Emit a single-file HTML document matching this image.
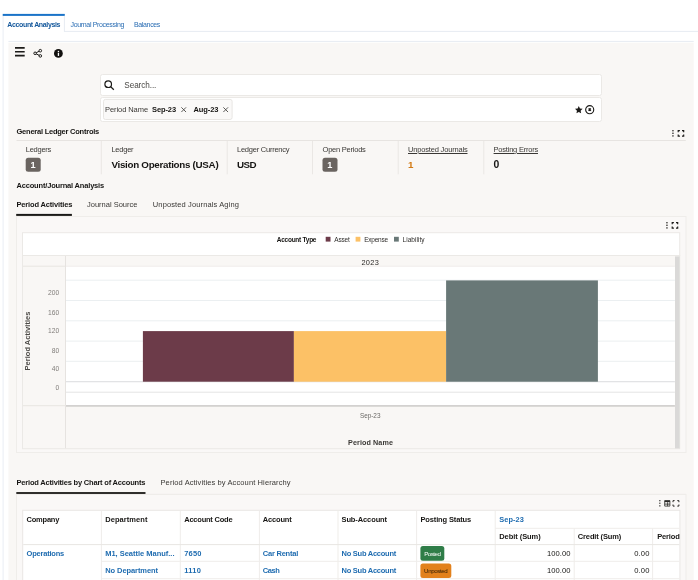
<!DOCTYPE html>
<html lang="en"><head><meta charset="utf-8"><title>Account Analysis</title>
<style>
html,body{margin:0;padding:0;background:#fff;}
body{width:698px;height:580px;overflow:hidden;}
#root{position:relative;width:698px;height:580px;overflow:hidden;background:#fff;font-family:"Liberation Sans",sans-serif;}
.t{position:absolute;white-space:nowrap;line-height:1;}
#txt{position:absolute;left:0;top:0;width:698px;height:580px;will-change:opacity;opacity:.999;}
svg{position:absolute;overflow:visible;}

</style></head>
<body>
<div id="root">
<svg id="bg" width="698" height="580" viewBox="0 0 698 580" style="left:0;top:0">
<rect x="2.60" y="15.90" width="1.00" height="564.10" fill="#e9edf4"/>
<rect x="2.70" y="13.90" width="62.10" height="2.00" fill="#1a73c8"/>
<rect x="63.90" y="15.90" width="1.00" height="16.00" fill="#e7ebf2"/>
<rect x="64.00" y="30.90" width="634.00" height="1.00" fill="#e7ebf2"/>
<rect x="8.40" y="40.90" width="685.30" height="1.00" fill="#e7ebf2"/>
<rect x="8.40" y="42.70" width="685.30" height="537.30" fill="#f9f7f5"/>
<rect x="100.50" y="74.50" width="501.00" height="21.00" rx="2" fill="#ffffff" stroke="#ebe9e6" stroke-width="1"/>
<rect x="100.50" y="97.50" width="501.00" height="24.00" rx="2" fill="#ffffff" stroke="#ebe9e6" stroke-width="1"/>
<rect x="103.50" y="99.40" width="128.60" height="20.10" rx="2" fill="#faf9f8" stroke="#e8e6e3" stroke-width="1"/>
<rect x="16.50" y="140.00" width="669.30" height="1.00" fill="#e7e4e1"/>
<rect x="100.80" y="141.00" width="1.00" height="33.30" fill="#eae7e4"/>
<rect x="226.70" y="141.00" width="1.00" height="33.30" fill="#eae7e4"/>
<rect x="312.00" y="141.00" width="1.00" height="33.30" fill="#eae7e4"/>
<rect x="397.70" y="141.00" width="1.00" height="33.30" fill="#eae7e4"/>
<rect x="483.30" y="141.00" width="1.00" height="33.30" fill="#eae7e4"/>
<rect x="25.70" y="157.70" width="15.00" height="14.10" rx="2.5" fill="#6a6460"/>
<rect x="322.50" y="157.70" width="15.00" height="14.10" rx="2.5" fill="#6a6460"/>
<rect x="16.50" y="216.00" width="669.50" height="1.00" fill="#eeece9"/>
<rect x="16.20" y="213.90" width="55.70" height="2.00" fill="#1a1917"/>
<rect x="16.50" y="216.50" width="669.50" height="236.00" fill="#faf8f7" stroke="#efedea" stroke-width="1"/>
<rect x="22.50" y="232.70" width="657.20" height="22.80" fill="#ffffff" stroke="#ebe9e6" stroke-width="1"/>
<rect x="22.50" y="255.50" width="657.20" height="193.20" fill="#f9f7f5" stroke="#ebe9e6" stroke-width="1"/>
<rect x="325.70" y="236.80" width="4.80" height="4.80" fill="#6c3b49"/>
<rect x="355.60" y="236.80" width="4.80" height="4.80" fill="#fcc166"/>
<rect x="394.00" y="236.80" width="4.80" height="4.80" fill="#697877"/>
<rect x="65.80" y="266.40" width="609.10" height="139.20" fill="#ffffff"/>
<rect x="23.00" y="265.70" width="42.80" height="1.00" fill="#e8e5e2"/>
<rect x="65.80" y="265.70" width="609.10" height="1.00" fill="#efedeb"/>
<rect x="65.00" y="256.00" width="1.00" height="192.20" fill="#e6e3e0"/>
<rect x="66.00" y="279.70" width="608.90" height="1.00" fill="#ebeff1"/>
<rect x="66.00" y="300.00" width="608.90" height="1.00" fill="#ebeff1"/>
<rect x="66.00" y="320.30" width="608.90" height="1.00" fill="#ebeff1"/>
<rect x="66.00" y="340.60" width="608.90" height="1.00" fill="#ebeff1"/>
<rect x="66.00" y="360.80" width="608.90" height="1.00" fill="#ebeff1"/>
<rect x="66.00" y="381.15" width="608.90" height="1.10" fill="#dddfe1"/>
<rect x="66.00" y="391.70" width="608.90" height="1.00" fill="#e4e4e4"/>
<rect x="23.00" y="405.20" width="42.80" height="1.00" fill="#e8e5e2"/>
<rect x="66.00" y="405.10" width="608.90" height="1.60" fill="#cfcdcb"/>
<rect x="142.90" y="331.10" width="151.00" height="50.60" fill="#6c3b49"/>
<rect x="293.90" y="331.10" width="152.20" height="50.60" fill="#fcc166"/>
<rect x="446.10" y="280.40" width="151.80" height="101.30" fill="#697877"/>
<rect x="675.00" y="256.40" width="4.60" height="192.00" fill="#dad9d8"/>
<rect x="16.50" y="493.80" width="669.50" height="1.00" fill="#eeece9"/>
<rect x="16.30" y="492.10" width="129.20" height="1.80" fill="#1a1917"/>
<rect x="16.50" y="494.50" width="669.50" height="95.00" fill="#faf8f7" stroke="#efedea" stroke-width="1"/>
<rect x="22.70" y="510.30" width="657.20" height="79.20" fill="#ffffff" stroke="#e9e7e4" stroke-width="1"/>
<rect x="100.90" y="510.80" width="1.00" height="69.20" fill="#efedea"/>
<rect x="179.80" y="510.80" width="1.00" height="69.20" fill="#efedea"/>
<rect x="258.90" y="510.80" width="1.00" height="69.20" fill="#efedea"/>
<rect x="337.50" y="510.80" width="1.00" height="69.20" fill="#efedea"/>
<rect x="416.10" y="510.80" width="1.00" height="69.20" fill="#efedea"/>
<rect x="494.70" y="510.80" width="1.00" height="69.20" fill="#efedea"/>
<rect x="573.70" y="528.30" width="1.00" height="51.70" fill="#efedea"/>
<rect x="652.10" y="528.30" width="1.00" height="51.70" fill="#efedea"/>
<rect x="495.20" y="527.80" width="184.20" height="1.00" fill="#efedea"/>
<rect x="23.20" y="544.10" width="656.20" height="1.00" fill="#e8e6e3"/>
<rect x="101.40" y="560.80" width="578.00" height="1.00" fill="#efedea"/>
<rect x="101.40" y="578.20" width="578.00" height="1.00" fill="#efedea"/>
<rect x="420.40" y="545.90" width="23.90" height="14.80" rx="2.5" fill="#2f7d48"/>
<rect x="420.40" y="563.50" width="30.90" height="14.50" rx="2.5" fill="#e2811c"/>
</svg>
<svg style="left:15.3px;top:47.2px" width="9.7" height="10" viewBox="0 0 9.7 10"><path d="M0 .85H9.7M0 4.75H9.7M0 8.6H9.7" stroke="#1c1b19" stroke-width="1.6" fill="none"/></svg>
<svg style="left:33px;top:49px" width="10" height="9" viewBox="0 0 10 9"><path d="M2.2 4.3L7.2 1.7M2.2 4.3L7.2 6.9" stroke="#1c1b19" stroke-width="1" fill="none"/><circle cx="2.1" cy="4.3" r="1.3" fill="#f9f7f5" stroke="#1c1b19" stroke-width="1"/><circle cx="7.3" cy="1.7" r="1.3" fill="#f9f7f5" stroke="#1c1b19" stroke-width="1"/><circle cx="7.3" cy="6.9" r="1.3" fill="#f9f7f5" stroke="#1c1b19" stroke-width="1"/></svg>
<svg style="left:54.1px;top:48.7px" width="8.8" height="8.8" viewBox="0 0 10 10"><circle cx="5" cy="5" r="5" fill="#12110f"/><rect x="4.3" y="4.3" width="1.5" height="3.6" fill="#fff"/><rect x="4.3" y="2.1" width="1.5" height="1.4" fill="#fff"/></svg>
<svg style="left:104px;top:80.2px" width="11" height="11" viewBox="0 0 11 11"><circle cx="4.2" cy="4.2" r="3.3" fill="none" stroke="#1c1b19" stroke-width="1.2"/><path d="M6.6 6.6L9.8 9.8" stroke="#1c1b19" stroke-width="1.3" fill="none"/></svg>
<svg style="left:181.2px;top:106.8px" width="5.4" height="5.4" viewBox="0 0 6 6"><path d="M.4 .4L5.6 5.6M5.6 .4L.4 5.6" stroke="#4a4845" stroke-width="1" fill="none"/></svg>
<svg style="left:223.4px;top:106.8px" width="5.4" height="5.4" viewBox="0 0 6 6"><path d="M.4 .4L5.6 5.6M5.6 .4L.4 5.6" stroke="#4a4845" stroke-width="1" fill="none"/></svg>
<svg style="left:574.7px;top:106px" width="7.6" height="7.4" viewBox="0 0 10 9.6"><path d="M5 0L6.5 3.3L10 3.7L7.4 6.1L8.1 9.6L5 7.8L1.9 9.6L2.6 6.1L0 3.7L3.5 3.3Z" fill="#1c1b19"/></svg>
<svg style="left:585.2px;top:105px" width="9.4" height="9.4" viewBox="0 0 10 10"><circle cx="5" cy="5" r="4.3" fill="none" stroke="#1c1b19" stroke-width="1.2"/><path d="M3.8 3.8L6.2 6.2M6.2 3.8L3.8 6.2" stroke="#1c1b19" stroke-width="1.5" fill="none"/></svg>
<svg style="left:671.6px;top:130px" width="13" height="7" viewBox="0 0 13 7"><g fill="#1c1b19"><rect x=".35" y="0" width="1.2" height="1.4"/><rect x=".35" y="2.6" width="1.2" height="1.4"/><rect x=".35" y="5.2" width="1.2" height="1.4"/></g><path d="M6.2 2.3V.6H7.9M10 .6H11.7V2.3M11.7 4.4V6.1H10M7.9 6.1H6.2V4.4" stroke="#1c1b19" stroke-width="1.15" fill="none"/></svg>
<svg style="left:666.3px;top:222px" width="13" height="7" viewBox="0 0 13 7"><g fill="#1c1b19"><rect x=".35" y="0" width="1.2" height="1.4"/><rect x=".35" y="2.6" width="1.2" height="1.4"/><rect x=".35" y="5.2" width="1.2" height="1.4"/></g><path d="M6.2 2.3V.6H7.9M10 .6H11.7V2.3M11.7 4.4V6.1H10M7.9 6.1H6.2V4.4" stroke="#1c1b19" stroke-width="1.15" fill="none"/></svg>
<svg style="left:658.5px;top:499.9px" width="21" height="7" viewBox="0 0 21 7"><g fill="#2a2826"><rect x=".3" y="0" width="1.1" height="1.3"/><rect x=".3" y="2.6" width="1.1" height="1.3"/><rect x=".3" y="5.2" width="1.1" height="1.3"/></g><path d="M5.7 .6H10.9V6.1H5.7ZM5.7 4.1H10.9M8.6 2.2V6.1" stroke="#2a2826" stroke-width=".8" fill="none"/><rect x="5.7" y=".6" width="5.2" height="1.5" fill="#2a2826"/><path d="M14 2.2V.6H15.6M18.3 .6H19.9V2.2M19.9 4.5V6.1H18.3M15.6 6.1H14V4.5" stroke="#2a2826" stroke-width="1" fill="none"/></svg>

<div id="txt">
<span class="t" style="left:7.30px;top:21px;line-height:7px;font-size:7.0px;color:#14589c;font-weight:bold;letter-spacing:-0.355px;">Account Analysis</span>
<span class="t" style="left:70.50px;top:21px;line-height:7px;font-size:7.0px;color:#2a6db3;letter-spacing:-0.335px;">Journal Processing</span>
<span class="t" style="left:134.00px;top:21px;line-height:7px;font-size:7.0px;color:#2a6db3;letter-spacing:-0.350px;">Balances</span>
<span class="t" style="left:124.30px;top:81px;line-height:9px;font-size:8.2px;color:#4a4845;letter-spacing:-0.087px;">Search...</span>
<span class="t" style="left:105.00px;top:105px;line-height:9px;font-size:7.5px;color:#3a3835;letter-spacing:-0.071px;">Period Name</span>
<span class="t" style="left:152.00px;top:105px;line-height:9px;font-size:7.5px;color:#161513;font-weight:bold;letter-spacing:-0.102px;">Sep-23</span>
<span class="t" style="left:193.40px;top:105px;line-height:9px;font-size:7.5px;color:#161513;font-weight:bold;letter-spacing:-0.070px;">Aug-23</span>
<span class="t" style="left:16.50px;top:127px;line-height:9px;font-size:7.5px;color:#161513;font-weight:bold;letter-spacing:-0.236px;">General Ledger Controls</span>
<span class="t" style="left:25.80px;top:145px;line-height:9px;font-size:7.5px;color:#3a3835;letter-spacing:-0.273px;">Ledgers</span>
<span class="t" style="left:111.40px;top:145px;line-height:9px;font-size:7.5px;color:#3a3835;letter-spacing:-0.227px;">Ledger</span>
<span class="t" style="left:111.40px;top:159px;line-height:11px;font-size:9.8px;color:#161513;font-weight:bold;letter-spacing:-0.287px;">Vision Operations (USA)</span>
<span class="t" style="left:237.00px;top:145px;line-height:9px;font-size:7.5px;color:#3a3835;letter-spacing:-0.238px;">Ledger Currency</span>
<span class="t" style="left:237.00px;top:159px;line-height:11px;font-size:9.8px;color:#161513;font-weight:bold;letter-spacing:-0.600px;">USD</span>
<span class="t" style="left:322.60px;top:145px;line-height:9px;font-size:7.5px;color:#3a3835;letter-spacing:-0.240px;">Open Periods</span>
<span class="t" style="left:408.00px;top:145px;line-height:9px;font-size:7.5px;color:#3a3835;letter-spacing:-0.179px;text-decoration:underline;">Unposted Journals</span>
<span class="t" style="left:408.00px;top:159px;line-height:11px;font-size:9.8px;color:#d27a14;font-weight:bold;">1</span>
<span class="t" style="left:493.60px;top:145px;line-height:9px;font-size:7.5px;color:#3a3835;letter-spacing:-0.224px;text-decoration:underline;">Posting Errors</span>
<span class="t" style="left:493.60px;top:159px;line-height:11px;font-size:10.4px;color:#161513;font-weight:bold;">0</span>
<span class="t" style="left:30.54px;top:160px;line-height:10px;font-size:9.2px;color:#ffffff;font-weight:bold;">1</span>
<span class="t" style="left:327.34px;top:160px;line-height:10px;font-size:9.2px;color:#ffffff;font-weight:bold;">1</span>
<span class="t" style="left:16.50px;top:181px;line-height:9px;font-size:7.5px;color:#161513;font-weight:bold;letter-spacing:-0.180px;">Account/Journal Analysis</span>
<span class="t" style="left:16.50px;top:200px;line-height:9px;font-size:7.5px;color:#161513;font-weight:bold;letter-spacing:-0.165px;">Period Activities</span>
<span class="t" style="left:87.00px;top:200px;line-height:9px;font-size:7.5px;color:#3a3835;">Journal Source</span>
<span class="t" style="left:152.80px;top:200px;line-height:9px;font-size:7.5px;color:#3a3835;letter-spacing:0.122px;">Unposted Journals Aging</span>
<span class="t" style="left:276.80px;top:236px;line-height:7px;font-size:6.5px;color:#161513;font-weight:bold;letter-spacing:-0.258px;">Account Type</span>
<span class="t" style="left:334.30px;top:236px;line-height:7px;font-size:6.5px;color:#2e2c2a;letter-spacing:-0.173px;">Asset</span>
<span class="t" style="left:364.20px;top:236px;line-height:7px;font-size:6.5px;color:#2e2c2a;letter-spacing:-0.228px;">Expense</span>
<span class="t" style="left:402.60px;top:236px;line-height:7px;font-size:6.5px;color:#2e2c2a;letter-spacing:0.024px;">Liability</span>
<span class="t" style="left:361.44px;top:258px;line-height:9px;font-size:7.4px;color:#2a2826;letter-spacing:0.287px;">2023</span>
<span class="t" style="left:48.03px;top:289px;line-height:7px;font-size:6.7px;color:#807d7a;">200</span>
<span class="t" style="left:48.03px;top:309px;line-height:7px;font-size:6.7px;color:#807d7a;">160</span>
<span class="t" style="left:48.03px;top:327px;line-height:7px;font-size:6.7px;color:#807d7a;">120</span>
<span class="t" style="left:51.75px;top:347px;line-height:7px;font-size:6.7px;color:#807d7a;">80</span>
<span class="t" style="left:51.75px;top:365px;line-height:7px;font-size:6.7px;color:#807d7a;">40</span>
<span class="t" style="left:55.47px;top:384px;line-height:7px;font-size:6.7px;color:#807d7a;">0</span>
<span class="t" style="left:359.94px;top:412px;line-height:7px;font-size:6.4px;color:#6b6966;letter-spacing:-0.018px;">Sep-23</span>
<span class="t" style="left:348.05px;top:438px;line-height:9px;font-size:7.2px;color:#3a3835;font-weight:bold;letter-spacing:0.095px;">Period Name</span>
<span class="t" style="left:16.50px;top:478px;line-height:9px;font-size:7.5px;color:#161513;font-weight:bold;letter-spacing:-0.196px;">Period Activities by Chart of Accounts</span>
<span class="t" style="left:160.50px;top:478px;line-height:9px;font-size:7.5px;color:#3a3835;letter-spacing:0.113px;">Period Activities by Account Hierarchy</span>
<span class="t" style="left:26.60px;top:515px;line-height:9px;font-size:7.5px;color:#161513;font-weight:bold;letter-spacing:-0.239px;">Company</span>
<span class="t" style="left:105.20px;top:515px;line-height:9px;font-size:7.5px;color:#161513;font-weight:bold;letter-spacing:0.061px;">Department</span>
<span class="t" style="left:184.20px;top:515px;line-height:9px;font-size:7.5px;color:#161513;font-weight:bold;letter-spacing:-0.220px;">Account Code</span>
<span class="t" style="left:262.80px;top:515px;line-height:9px;font-size:7.5px;color:#161513;font-weight:bold;letter-spacing:-0.186px;">Account</span>
<span class="t" style="left:341.50px;top:515px;line-height:9px;font-size:7.5px;color:#161513;font-weight:bold;letter-spacing:-0.107px;">Sub-Account</span>
<span class="t" style="left:420.50px;top:515px;line-height:9px;font-size:7.5px;color:#161513;font-weight:bold;letter-spacing:-0.144px;">Posting Status</span>
<span class="t" style="left:499.20px;top:515px;line-height:9px;font-size:7.4px;color:#1f6cb0;font-weight:bold;letter-spacing:0.092px;">Sep-23</span>
<span class="t" style="left:499.20px;top:532px;line-height:9px;font-size:7.5px;color:#161513;font-weight:bold;letter-spacing:-0.054px;">Debit (Sum)</span>
<span class="t" style="left:577.80px;top:532px;line-height:9px;font-size:7.5px;color:#161513;font-weight:bold;letter-spacing:-0.142px;">Credit (Sum)</span>
<span class="t" style="left:657.20px;top:532px;line-height:9px;font-size:7.5px;color:#161513;font-weight:bold;letter-spacing:-0.141px;">Period</span>
<span class="t" style="left:26.60px;top:549px;line-height:9px;font-size:7.5px;color:#1f6cb0;font-weight:bold;letter-spacing:-0.219px;">Operations</span>
<span class="t" style="left:105.20px;top:549px;line-height:9px;font-size:7.5px;color:#1f6cb0;font-weight:bold;letter-spacing:-0.015px;">M1, Seattle Manuf...</span>
<span class="t" style="left:105.20px;top:566px;line-height:9px;font-size:7.5px;color:#1f6cb0;font-weight:bold;letter-spacing:-0.074px;">No Department</span>
<span class="t" style="left:184.20px;top:549px;line-height:9px;font-size:7.5px;color:#1f6cb0;font-weight:bold;letter-spacing:0.203px;">7650</span>
<span class="t" style="left:184.20px;top:566px;line-height:9px;font-size:7.5px;color:#1f6cb0;font-weight:bold;letter-spacing:0.285px;">1110</span>
<span class="t" style="left:262.80px;top:549px;line-height:9px;font-size:7.5px;color:#1f6cb0;font-weight:bold;letter-spacing:-0.232px;">Car Rental</span>
<span class="t" style="left:262.80px;top:566px;line-height:9px;font-size:7.5px;color:#1f6cb0;font-weight:bold;letter-spacing:-0.411px;">Cash</span>
<span class="t" style="left:341.50px;top:549px;line-height:9px;font-size:7.5px;color:#1f6cb0;font-weight:bold;letter-spacing:-0.254px;">No Sub Account</span>
<span class="t" style="left:341.50px;top:566px;line-height:9px;font-size:7.5px;color:#1f6cb0;font-weight:bold;letter-spacing:-0.254px;">No Sub Account</span>
<span class="t" style="left:546.94px;top:549px;line-height:9px;font-size:7.6px;color:#161513;letter-spacing:0.044px;">100.00</span>
<span class="t" style="left:546.94px;top:566px;line-height:9px;font-size:7.6px;color:#161513;letter-spacing:0.044px;">100.00</span>
<span class="t" style="left:634.18px;top:549px;line-height:9px;font-size:7.6px;color:#161513;letter-spacing:0.180px;">0.00</span>
<span class="t" style="left:634.18px;top:566px;line-height:9px;font-size:7.6px;color:#161513;letter-spacing:0.180px;">0.00</span>
<span class="t" style="left:424.14px;top:550px;line-height:7px;font-size:6.2px;color:#ffffff;letter-spacing:-0.511px;">Posted</span>
<span class="t" style="left:424.09px;top:567px;line-height:7px;font-size:6.2px;color:#2a1a05;letter-spacing:-0.413px;">Unposted</span>
<span class="t" style="left:27.5px;top:340.7px;font-size:7.5px;font-weight:bold;color:#4a4845;transform:translate(-50%,-50%) rotate(-90deg);letter-spacing:0.02px">Period Activities</span>
</div>
</div>
</body></html>
